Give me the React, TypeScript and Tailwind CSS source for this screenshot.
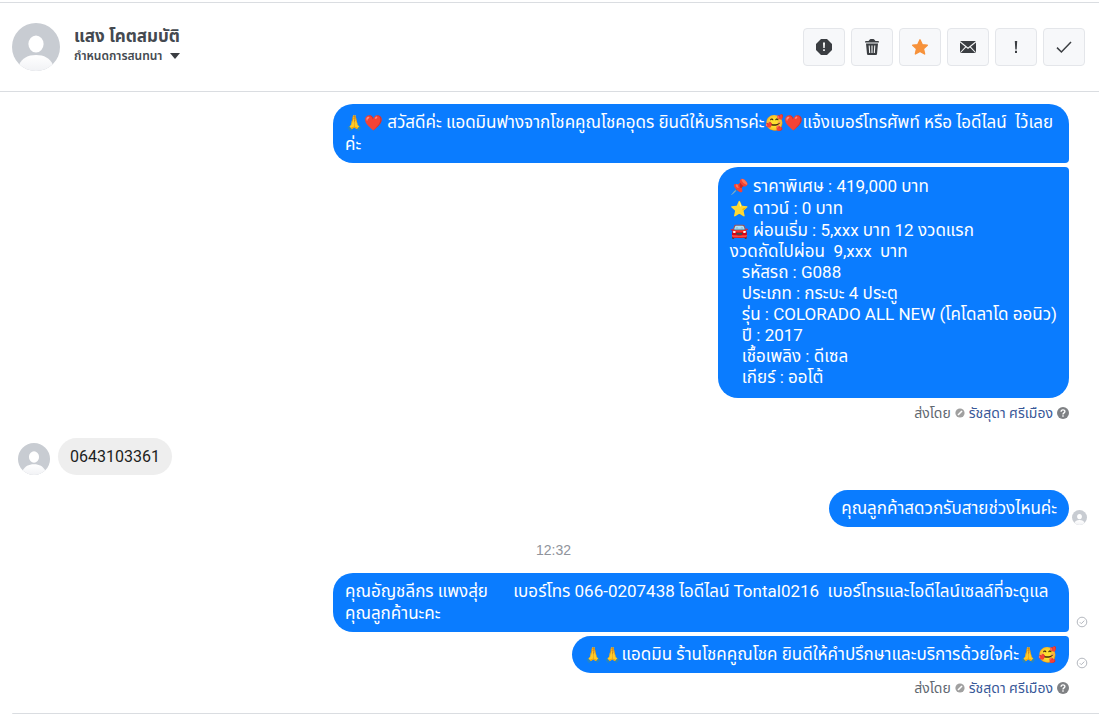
import React from "react";

const Avatar = ({ className }: { className: string }) => (
  <svg viewBox="0 0 48 48" className={className} role="img" aria-label="รูปโปรไฟล์">
    <defs>
      <clipPath id="avatarClip">
        <circle cx="24" cy="24" r="24" />
      </clipPath>
      <linearGradient id="avatarBody" x1="0" y1="0" x2="0" y2="1">
        <stop offset="0" stopColor="#ffffff" />
        <stop offset="1" stopColor="#f1f2f5" />
      </linearGradient>
    </defs>
    <g clipPath="url(#avatarClip)">
      <rect width="48" height="48" fill="#c8ccd2" />
      <ellipse cx="24" cy="21" rx="7.6" ry="8.6" fill="#fff" />
      <path d="M7 48V42C10 35 16 32 24 32S38 35 41 42V48Z" fill="url(#avatarBody)" />
    </g>
  </svg>
);

const Emoji = ({ children }: { children: string }) => <span className="text-[15px] leading-none">{children}</span>;

const SeenMark = () => (
  <svg viewBox="0 0 12 12" className="h-3 w-3" fill="none" stroke="#b4b8bf" strokeWidth="1">
    <circle cx="6" cy="6" r="4.8" />
    <path d="M3.8 6.2 5.3 7.7 8.3 4.6" />
  </svg>
);

const actions = [
  {
    label: "สแปม",
    icon: (
      <>
        <path d="M5 0H11L16 5V11L11 16H5L0 11V5Z" fill="#3b3e42" />
        <path d="M7 3.5H9L8.7 9H7.3ZM7.2 10.2H8.8V12H7.2Z" fill="#fff" />
      </>
    ),
  },
  {
    label: "ลบ",
    icon: (
      <>
        <path d="M4.5 2 6 .3Q6.3 0 6.8 0H9.2Q9.7 0 10 .3L11.5 2H14Q15 2 15 3V3.6H1V3Q1 2 2 2Z" fill="#3b3e42" />
        <path d="M2 4.6H14L13 15Q12.9 16 12 16H4Q3.1 16 3 15Z" fill="#3b3e42" />
        <path d="M5.2 6.5 5.7 14M8 6.5V14M10.8 6.5 10.3 14" stroke="#f5f6f7" strokeWidth="1.1" />
      </>
    ),
  },
  {
    label: "ติดดาว",
    icon: (
      <path
        d="M8 .8 10.2 5.6 15.3 6.2 11.5 9.8 12.6 15 8 12.4 3.4 15 4.5 9.8 .7 6.2 5.8 5.6Z"
        fill="#f7923b"
        stroke="#f7923b"
        strokeWidth="1.4"
        strokeLinejoin="round"
      />
    ),
  },
  {
    label: "ทำเครื่องหมายว่ายังไม่ได้อ่าน",
    icon: (
      <>
        <rect x="0" y="2" width="16" height="12" rx="1.2" fill="#3b3e42" />
        <path d="M0 2.8 8 9.2 16 2.8M.5 13.5 5.8 7.8M15.5 13.5 10.2 7.8" stroke="#f5f6f7" strokeWidth="1.1" fill="none" />
      </>
    ),
  },
  {
    label: "ติดตามผล",
    icon: <path d="M6.8 2H9.2L8.7 10.4H7.3ZM7 11.8H9V14H7Z" fill="#3b3e42" />,
  },
  {
    label: "เสร็จสิ้น",
    icon: <path d="M1 8.6 5.4 13 15 3" stroke="#3b3e42" strokeWidth="1.5" fill="none" />,
  },
];

const offers = [
  { emoji: "📌", text: "ราคาพิเศษ : 419,000 บาท" },
  { emoji: "⭐", text: "ดาวน์ : 0 บาท" },
  { emoji: "🚘", text: "ผ่อนเริ่ม : 5,xxx บาท 12 งวดแรก" },
];

const specs = [
  "รหัสรถ : G088",
  "ประเภท : กระบะ 4 ประตู",
  "รุ่น : COLORADO ALL NEW (โคโดลาโด ออนิว)",
  "ปี : 2017",
  "เชื้อเพลิง : ดีเซล",
  "เกียร์ : ออโต้",
];

const SentBy = () => (
  <div className="flex h-[30px] items-center justify-end gap-1 text-sm leading-5 text-[#616770]">
    <span>ส่งโดย</span>
    <svg viewBox="0 0 10 10" className="h-[10px] w-[10px]">
      <circle cx="5" cy="5" r="4.6" fill="#a0a0a0" />
      <path d="M3 7 7 3" stroke="#fff" strokeWidth="1.6" />
    </svg>
    <a href="#" className="text-[#385898]">
      รัชสุดา ศรีเมือง
    </a>
    <button type="button" aria-label="ความช่วยเหลือ">
      <svg viewBox="0 0 12 12" className="h-3 w-3">
        <circle cx="6" cy="6" r="6" fill="#7f8184" />
        <path d="M4.1 4.7C4.1 2.3 7.9 2.3 7.9 4.6 7.9 5.9 6 5.9 6 7.4M6 8.3V9.7" stroke="#fff" strokeWidth="1.4" fill="none" />
      </svg>
    </button>
  </div>
);

const App = () => {
  return (
    <div className="min-h-screen bg-white pt-0.5 font-['Roboto','Noto_Sans_Thai','Noto_Sans',sans-serif]">
      {/* Conversation header */}
      <header className="flex h-[90px] items-center justify-between border-y border-[#dadde1] pl-3 pr-[14px]">
        <div className="flex items-center gap-[14px]">
          <Avatar className="h-12 w-12" />
          <div className="pb-1.5">
            <h1 className="text-[17px] font-bold leading-6 text-[#444950]">แสง โคตสมบัติ</h1>
            <button type="button" className="flex items-center gap-2 text-xs font-semibold leading-4 text-[#444950]">
              กำหนดการสนทนา
              <svg viewBox="0 0 10 6" className="h-[6px] w-[10px]">
                <path d="M0 0H10L5 6Z" fill="#3b3e42" />
              </svg>
            </button>
          </div>
        </div>
        <div className="flex gap-[6px]">
          {actions.map((action) => (
            <button
              key={action.label}
              type="button"
              aria-label={action.label}
              className="flex h-[38px] w-[42px] items-center justify-center rounded border border-[#e4e6ea] bg-[#f7f8fa]"
            >
              <svg viewBox="0 0 16 16" className="h-4 w-4">
                {action.icon}
              </svg>
            </button>
          ))}
        </div>
      </header>

      {/* Messages */}
      <main className="pl-[18px] pr-[30px] pt-3 text-[17px] leading-[21px]">
        <div className="flex flex-col items-end gap-1 text-white">
          <div className="flex w-[736px] flex-col gap-px rounded-[20px] rounded-br bg-[#0a7cff] px-3 py-2">
            <p className="whitespace-pre">
              <Emoji>🙏❤️</Emoji> สวัสดีค่ะ แอดมินฟางจากโชคคูณโชคอุดร ยินดีให้บริการค่ะ<Emoji>🥰❤️</Emoji>
              แจ้งเบอร์โทรศัพท์ หรือ ไอดีไลน์{"  "}ไว้เลย
            </p>
            <p>ค่ะ</p>
          </div>
          <div className="rounded-[20px] rounded-tr bg-[#0a7cff] px-3 pb-[10px] pt-2">
            {offers.map((offer) => (
              <p key={offer.emoji} className="leading-[22px]">
                <Emoji>{offer.emoji}</Emoji> {offer.text}
              </p>
            ))}
            <p className="whitespace-pre">งวดถัดไปผ่อน  9,xxx  บาท</p>
            <ul className="pl-3">
              {specs.map((line) => (
                <li key={line}>{line}</li>
              ))}
            </ul>
          </div>
        </div>
        <SentBy />

        <div className="flex items-end gap-2 pt-[10px]">
          <Avatar className="h-8 w-8" />
          <p className="rounded-full bg-[#eeeeee] px-3 py-2 text-base leading-[21px] text-[#1c1e21]">0643103361</p>
        </div>

        <div className="relative mt-[15px] flex justify-end">
          <p className="rounded-full bg-[#0a7cff] px-3 py-2 text-white">คุณลูกค้าสดวกรับสายช่วงไหนค่ะ</p>
          <span className="absolute -right-[18px] bottom-0.5">
            <Avatar className="block h-[15px] w-[15px]" />
          </span>
        </div>

        <time className="block py-[14px] pl-5 text-center font-['Liberation_Sans',sans-serif] text-sm leading-[18px] text-[#90949c]">
          12:32
        </time>

        <div className="flex flex-col items-end gap-1 text-white">
          <div className="relative flex w-[736px] flex-col gap-px rounded-[20px] rounded-br bg-[#0a7cff] px-3 py-2">
            <p className="whitespace-pre">คุณอัญชลีกร แพงสุ่ย      เบอร์โทร 066-0207438 ไอดีไลน์ Tontal0216  เบอร์โทรและไอดีไลน์เซลล์ที่จะดูแล</p>
            <p>คุณลูกค้านะคะ</p>
            <span className="absolute -right-[19px] bottom-1">
              <SeenMark />
            </span>
          </div>
          <div className="relative rounded-[20px] rounded-tr bg-[#0a7cff] px-3 py-2">
            <p>
              <Emoji>🙏🙏</Emoji>แอดมิน ร้านโชคคูณโชค ยินดีให้คำปรึกษาและบริการด้วยใจค่ะ<Emoji>🙏🥰</Emoji>
            </p>
            <span className="absolute -right-[19px] bottom-1">
              <SeenMark />
            </span>
          </div>
        </div>
        <SentBy />
      </main>
      <footer className="ml-3 mt-[10px] rounded-tl-lg border-t border-[#dadde1]" />
    </div>
  );
};

export default App;
